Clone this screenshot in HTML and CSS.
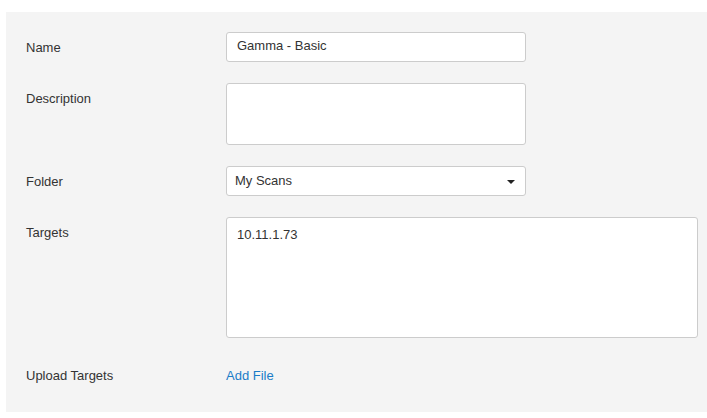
FILE: index.html
```html
<!DOCTYPE html>
<html>
<head>
<meta charset="utf-8">
<link rel="stylesheet" href="styles.css">
</head>
<body>
<div class="panel">
  <div class="row">
    <div class="label">Name</div>
    <div class="field field-input">Gamma - Basic</div>
  </div>
  <div class="row">
    <div class="label">Description</div>
    <div class="field field-desc"></div>
  </div>
  <div class="row">
    <div class="label">Folder</div>
    <div class="field field-select"><span>My Scans</span><span class="caret"></span></div>
  </div>
  <div class="row">
    <div class="label">Targets</div>
    <div class="field field-targets">10.11.1.73</div>
  </div>
  <div class="row row-last">
    <div class="label">Upload Targets</div>
    <div class="value"><a class="link" href="#">Add File</a></div>
  </div>
</div>
</body>
</html>
```
FILE: styles.css
```css
body {
  margin: 0;
  font-family: "Liberation Sans", Arial, sans-serif;
  font-size: 13px;
  color: #333;
  background: #fff;
}
.panel {
  margin: 12px 0 0 6px;
  padding: 20px 0 29px 20px;
  background: #f4f4f4;
  display: flex;
  flex-direction: column;
  gap: 21px;
}
.row {
  display: flex;
  align-items: flex-start;
}
.label {
  width: 200px;
  padding-top: 8px;
  line-height: 15px;
}
.row-last .label,
.row-last .value {
  padding-top: 9px;
}
.value {
  padding-top: 8px;
  line-height: 15px;
}
.field {
  box-sizing: border-box;
  background: #fff;
  border: 1px solid #ccc;
  border-radius: 3px;
  line-height: 15px;
}
.field-input {
  width: 300px;
  height: 30px;
  padding: 5px 10px;
}
.field-desc {
  width: 300px;
  height: 62px;
}
.field-select {
  width: 300px;
  height: 30px;
  padding: 6px 10px 0 8px;
  display: flex;
  justify-content: space-between;
  align-items: flex-start;
}
.caret {
  width: 0;
  height: 0;
  margin-top: 7px;
  border-left: 4px solid transparent;
  border-right: 4px solid transparent;
  border-top: 4px solid #222;
}
.field-targets {
  width: 472px;
  height: 121px;
  padding: 9px 10px;
}
.link {
  color: #1a7cc8;
  text-decoration: none;
}
```
